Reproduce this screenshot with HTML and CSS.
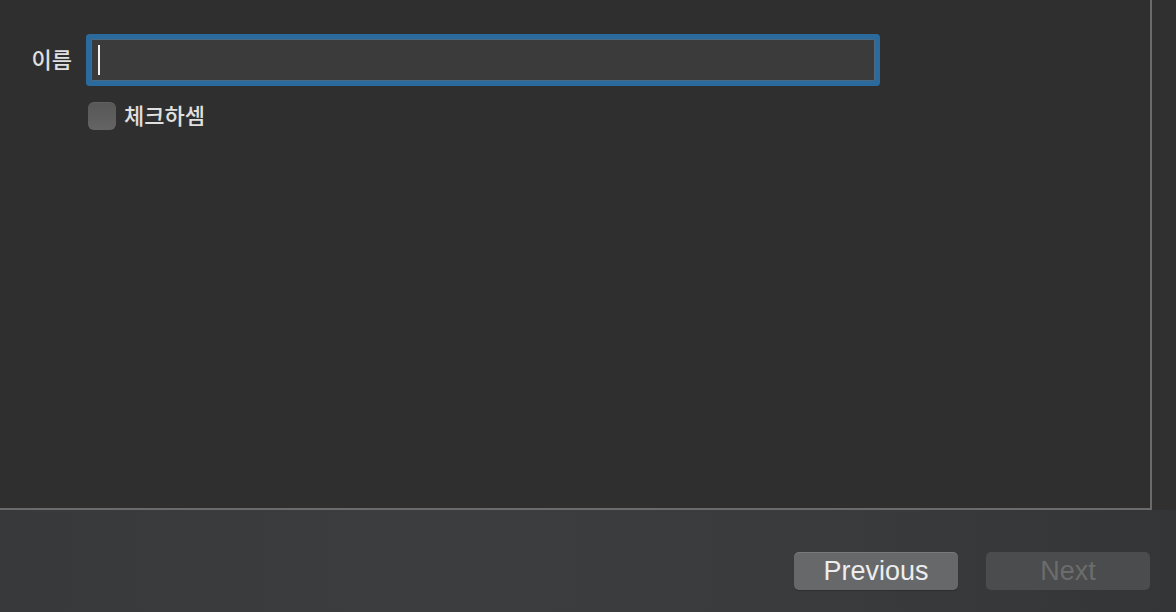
FILE: index.html
```html
<!DOCTYPE html>
<html lang="ko">
<head>
<meta charset="utf-8">
<link rel="stylesheet" href="styles.css">
</head>
<body>
<div class="window">
  <main class="panel">
    <div class="form-row">
      <label class="field-label" for="name">이름</label>
      <div class="field"><span class="caret"></span></div>
    </div>
    <div class="check-row">
      <span class="checkbox"></span>
      <span class="check-label">체크하셈</span>
    </div>
  </main>
  <footer class="footer">
    <button class="btn btn-primary">Previous</button>
    <button class="btn btn-disabled">Next</button>
  </footer>
</div>
</body>
</html>
```
FILE: styles.css
```css
* { box-sizing: border-box; }
html, body { margin: 0; padding: 0; }
body {
  width: 1176px;
  height: 612px;
  overflow: hidden;
  background: #303030;
  font-family: "Noto Sans CJK KR", "Noto Sans", sans-serif;
}
.window {
  display: flex;
  flex-direction: column;
  height: 612px;
}
.panel {
  width: 1152px;
  height: 510px;
  background: #2f2f2f;
  border-right: 2px solid #6b6b6b;
  border-bottom: 2px solid #6b6b6b;
  padding-top: 40px;
}
.form-row {
  display: flex;
  align-items: center;
}
.field-label {
  width: 72px;
  text-align: right;
  color: #e0e0e0;
  font-size: 22px;
  font-weight: 500;
  line-height: 36px;
  padding-bottom: 4px;
  margin-right: 20px;
}
.field {
  width: 782px;
  height: 40px;
  background: #3b3b3b;
  border-radius: 1px;
  box-shadow: 0 0 0 1px #4a6a84, 0 0 0 6px #2b6a9c;
  display: flex;
  align-items: center;
  padding-left: 6px;
}
.caret {
  width: 2px;
  height: 30px;
  background: #f2f2f2;
}
.check-row {
  display: flex;
  align-items: center;
  margin-top: 22px;
  margin-left: 88px;
}
.checkbox {
  width: 28px;
  height: 28px;
  border-radius: 6px;
  background: linear-gradient(#575757, #646464);
  box-shadow: inset 0 1px 0 rgba(255,255,255,0.06);
}
.check-label {
  margin-left: 8px;
  color: #e0e0e0;
  font-size: 22px;
  font-weight: 500;
  line-height: 24px;
  padding-bottom: 4px;
}
.footer {
  flex: 1;
  display: flex;
  justify-content: flex-end;
  align-items: flex-start;
  gap: 28px;
  padding: 42px 26px 0 0;
  background: linear-gradient(90deg, #37393a 0%, #3c3d3e 35%, #3a3b3c 70%, #343536 100%);
}
.btn {
  width: 164px;
  height: 38px;
  border: none;
  border-radius: 5px;
  font-family: "Liberation Sans", Arial, sans-serif;
  font-size: 27px;
  line-height: 38px;
  padding: 0;
}
.btn-primary {
  background: #67686a;
  color: #ededed;
  box-shadow: inset 0 1px 0 rgba(255,255,255,0.12), 0 1px 1px rgba(0,0,0,0.2);
}
.btn-disabled {
  background: #4b4c4d;
  color: #6c6c6c;
}
```
